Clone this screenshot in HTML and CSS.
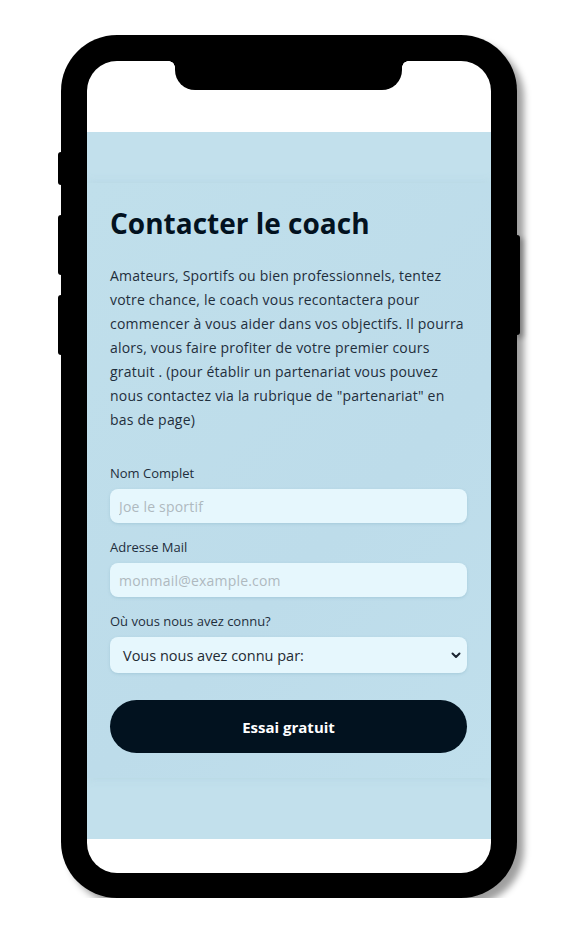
FILE: index.html
```html
<!DOCTYPE html>
<html lang="fr">
<head>
<meta charset="utf-8">
<title>Contacter le coach</title>
<link rel="stylesheet" href="styles.css">
</head>
<body>
<div class="stage">
  <div class="phone">
    <span class="btn btn-l1"></span>
    <span class="btn btn-l2"></span>
    <span class="btn btn-l3"></span>
    <span class="btn btn-r"></span>
    <div class="screen">
      <div class="notch"></div>
      <div class="top-space"></div>
      <section class="contact">
        <div class="card">
          <h1 class="title">Contacter le coach</h1>
          <p class="intro">Amateurs, Sportifs ou bien professionnels, tentez votre chance, le coach vous recontactera pour commencer à vous aider dans vos objectifs. Il pourra alors, vous faire profiter de votre premier cours gratuit . (pour établir un partenariat vous pouvez nous contactez via la rubrique de "partenariat" en bas de page)</p>
          <form class="form">
            <label class="field">
              <span class="label">Nom Complet</span>
              <input class="input" type="text" placeholder="Joe le sportif">
            </label>
            <label class="field">
              <span class="label">Adresse Mail</span>
              <input class="input" type="email" placeholder="monmail@example.com">
            </label>
            <label class="field">
              <span class="label">Où vous nous avez connu?</span>
              <span class="select">
                <span class="select-text">Vous nous avez connu par:</span>
                <svg class="chev" width="10" height="7" viewBox="0 0 10 7"><path d="M1.5 1.5 L5 5 L8.5 1.5" fill="none" stroke="#1a2430" stroke-width="2" stroke-linecap="round" stroke-linejoin="round"/></svg>
              </span>
            </label>
            <button class="submit" type="button">Essai gratuit</button>
          </form>
        </div>
      </section>
      <div class="bottom-space"></div>
    </div>
  </div>
</div>
</body>
</html>
```
FILE: styles.css
```css
* { box-sizing: border-box; }
html, body { margin: 0; padding: 0; background: #ffffff; }
body { font-family: "Open Sans", "Noto Sans", sans-serif; }

.stage {
  padding: 35px 0 0 61px;
}

.phone {
  position: relative;
  width: 456px;
  height: 863px;
  background: #000;
  border-radius: 56px;
  padding: 26px;
  box-shadow: 7px 7px 7px rgba(0, 0, 0, 0.38);
}

.btn {
  position: absolute;
  background: #000;
  width: 8px;
  border-radius: 3px;
}
.btn-l1 { left: -3px; top: 117px; height: 33px; }
.btn-l2 { left: -3px; top: 180px; height: 60px; }
.btn-l3 { left: -3px; top: 260px; height: 60px; }
.btn-r { right: -3px; top: 200px; height: 100px; box-shadow: 4px 3px 5px rgba(0,0,0,0.25); }

.screen {
  position: relative;
  height: 812px;
  background: #fff;
  border-radius: 30px;
  overflow: hidden;
  display: flex;
  flex-direction: column;
}

.notch {
  position: absolute;
  top: 0;
  left: 88px;
  width: 227px;
  height: 29px;
  background: #000;
  border-radius: 0 0 20px 20px;
}
.notch::before,
.notch::after {
  content: "";
  position: absolute;
  top: 0;
  width: 6px;
  height: 6px;
}
.notch::before {
  left: -6px;
  background: radial-gradient(circle at 0 100%, transparent 5.5px, #000 6px);
}
.notch::after {
  right: -6px;
  background: radial-gradient(circle at 100% 100%, transparent 5.5px, #000 6px);
}

.top-space { height: 71px; flex: none; }
.bottom-space { height: 34px; flex: none; }

.contact {
  height: 707px;
  flex: none;
  background: #c2e0ec;
  padding-top: 51px;
}

.card {
  height: 595px;
  padding: 23px 24px 25px 23px;
  background: linear-gradient(135deg, #c0dfeb 0%, #bddcea 60%, #c0dfec 100%);
  box-shadow: 0 -3px 8px rgba(170, 205, 220, 0.2), 0 3px 8px rgba(170, 205, 220, 0.2);
}

.title {
  margin: 0 0 24px;
  font-size: 28px;
  line-height: 34px;
  font-weight: 700;
  color: #03121f;
}

.intro {
  margin: 0 0 33px;
  font-size: 14px;
  line-height: 24px;
  letter-spacing: 0.2px;
  color: #1f2e3c;
}

.form {
  display: flex;
  flex-direction: column;
}

.field {
  display: flex;
  flex-direction: column;
  gap: 8px;
  margin-bottom: 16px;
}

.label {
  font-size: 13px;
  line-height: 16px;
  color: #1f2e3c;
}

.input {
  height: 34px;
  border: none;
  border-radius: 8px;
  background: #e6f7fd;
  padding: 0 9px;
  font: inherit;
  font-size: 14px;
  letter-spacing: 0.2px;
  color: #222;
  box-shadow: 0 1px 3px rgba(110, 160, 180, 0.3);
  outline: none;
}
.input::placeholder { color: #afb9bf; }

.select {
  height: 36px;
  border-radius: 8px;
  background: #e6f7fd;
  display: flex;
  align-items: center;
  justify-content: space-between;
  padding: 0 6px 0 13px;
  box-shadow: 0 1px 3px rgba(110, 160, 180, 0.3);
}
.select-text {
  font-size: 14.5px;
  color: #1f2a33;
}
.chev { flex: none; }

.field:last-of-type { margin-bottom: 27px; }

.submit {
  height: 53px;
  border: none;
  border-radius: 27px;
  background: #02121f;
  color: #fff;
  font: inherit;
  font-size: 15px;
  font-weight: 700;
  cursor: pointer;
}
```
